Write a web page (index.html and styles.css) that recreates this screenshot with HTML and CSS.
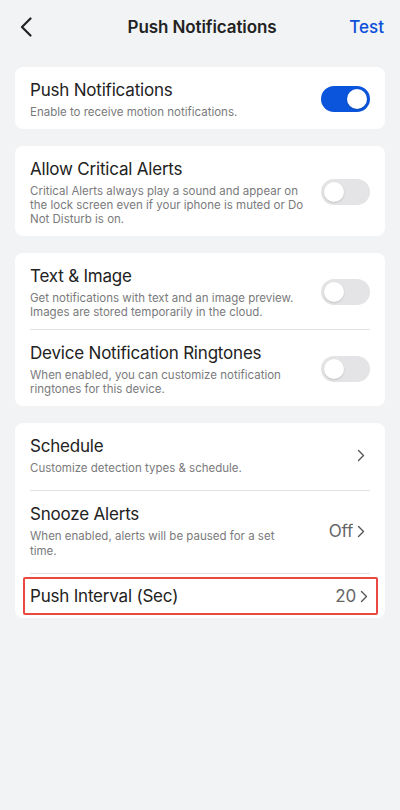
FILE: index.html
```html
<!DOCTYPE html>
<html lang="en">
<head>
<meta charset="UTF-8" />
<meta name="viewport" content="width=device-width, initial-scale=1" />
<title>Push Notifications</title>
<link rel="stylesheet" href="styles.css">
</head>
<body>

<!-- Top bar -->
<div class="topbar">
  <button class="back-btn" aria-label="Back">
    <svg width="12" height="20" viewBox="0 0 12 20"><path d="M10.5 1.5 L2 10 L10.5 18.5" fill="none" stroke="#222" stroke-width="2.2" stroke-linecap="round" stroke-linejoin="round"/></svg>
  </button>
  <div class="topbar-title">Push Notifications</div>
  <button class="test-btn">Test</button>
</div>

<div class="settings">

  <div class="card">
    <div class="row">
      <div class="row-text">
        <div class="row-title">Push Notifications</div>
        <div class="row-sub">Enable to receive motion notifications.</div>
      </div>
      <div class="switch on"><span class="knob"></span></div>
    </div>
  </div>

  <div class="card">
    <div class="row">
      <div class="row-text">
        <div class="row-title">Allow Critical Alerts</div>
        <div class="row-sub">Critical Alerts always play a sound and appear on the lock screen even if your iphone is muted or Do Not Disturb is on.</div>
      </div>
      <div class="switch"><span class="knob"></span></div>
    </div>
  </div>

  <div class="card">
    <div class="row">
      <div class="row-text">
        <div class="row-title">Text &amp; Image</div>
        <div class="row-sub">Get notifications with text and an image preview. Images are stored temporarily in the cloud.</div>
      </div>
      <div class="switch"><span class="knob"></span></div>
    </div>
    <div class="divider"></div>
    <div class="row">
      <div class="row-text">
        <div class="row-title">Device Notification Ringtones</div>
        <div class="row-sub">When enabled, you can customize notification ringtones for this device.</div>
      </div>
      <div class="switch"><span class="knob"></span></div>
    </div>
  </div>

  <div class="card">
    <div class="row nav-row">
      <div class="row-text">
        <div class="row-title">Schedule</div>
        <div class="row-sub">Customize detection types &amp; schedule.</div>
      </div>
      <div class="row-value">
        <svg class="chev" width="8" height="13" viewBox="0 0 8 13"><path d="M1.5 1.5 L6.5 6.5 L1.5 11.5" fill="none" stroke="#555" stroke-width="1.4" stroke-linecap="round" stroke-linejoin="round"/></svg>
      </div>
    </div>
    <div class="divider"></div>
    <div class="row nav-row">
      <div class="row-text">
        <div class="row-title">Snooze Alerts</div>
        <div class="row-sub">When enabled, alerts will be paused for a set time.</div>
      </div>
      <div class="row-value">
        <span>Off</span>
        <svg class="chev" width="8" height="13" viewBox="0 0 8 13"><path d="M1.5 1.5 L6.5 6.5 L1.5 11.5" fill="none" stroke="#555" stroke-width="1.4" stroke-linecap="round" stroke-linejoin="round"/></svg>
      </div>
    </div>
    <div class="divider"></div>
    <div class="highlight-wrap">
      <div class="row single highlight">
        <div class="row-title">Push Interval (Sec)</div>
        <div class="row-value">
          <span>20</span>
          <svg class="chev" width="8" height="13" viewBox="0 0 8 13"><path d="M1.5 1.5 L6.5 6.5 L1.5 11.5" fill="none" stroke="#555" stroke-width="1.4" stroke-linecap="round" stroke-linejoin="round"/></svg>
        </div>
      </div>
    </div>
  </div>

</div>

</body>
</html>
```

FILE: styles.css
```css
/* Reset & base */
* {
  box-sizing: border-box;
}
body {
  margin: 0;
  font-family: Inter, 'Noto Sans', 'Liberation Sans', sans-serif;
  background: #f2f3f5;
  color: #222;
  min-height: 100vh;
}

/* Top bar */
.topbar {
  height: 54px;
  display: flex;
  align-items: center;
  justify-content: space-between;
  padding: 0 16px 0 20px;
}
.back-btn {
  background: none;
  border: none;
  padding: 0;
  width: 40px;
  height: 30px;
  display: flex;
  align-items: center;
  cursor: pointer;
}
.topbar-title {
  font-size: 17px;
  font-weight: 600;
  letter-spacing: -0.1px;
  color: #222;
}
.test-btn {
  background: none;
  border: none;
  padding: 0;
  width: 40px;
  text-align: right;
  font-family: inherit;
  font-size: 17px;
  font-weight: 500;
  color: #0b50d9;
  cursor: pointer;
}

/* Cards */
.settings {
  padding: 13px 15px 20px;
  display: flex;
  flex-direction: column;
  gap: 17px;
}
.card {
  background: #fff;
  border-radius: 8px;
}
.divider {
  height: 1px;
  margin: 0 15px;
  background: #e2e2e4;
}

/* Rows */
.row {
  display: flex;
  align-items: center;
  justify-content: space-between;
  padding: 12px 15px 10px;
}
.nav-row {
  padding-bottom: 14px;
}
.row-text {
  max-width: 278px;
}
.nav-row .row-text {
  max-width: 264px;
}
.row-title {
  font-size: 17px;
  line-height: 22px;
  letter-spacing: -0.2px;
  color: #222;
}
.row-sub {
  margin-top: 4px;
  font-size: 11.5px;
  line-height: 14px;
  letter-spacing: 0;
  color: #7a7a7c;
}
.nav-row .row-sub {
  line-height: 15px;
}
.row-value {
  display: flex;
  align-items: center;
  gap: 4px;
  padding-right: 5px;
  font-size: 17px;
  letter-spacing: -0.2px;
  color: #666;
}

/* Highlighted row */
.highlight-wrap {
  padding: 3px 7px 3px 8px;
}
.row.single {
  padding: 0 0 0 5px;
  height: 38px;
}
.highlight {
  border: 2px solid #ea4841;
  border-radius: 2px;
}
.highlight .row-value {
  padding-right: 8px;
}

/* Toggle switch */
.switch {
  flex: none;
  width: 49px;
  height: 26px;
  border-radius: 13px;
  background: #e4e4e6;
  padding: 3px;
  display: flex;
}
.switch .knob {
  width: 20px;
  height: 20px;
  border-radius: 50%;
  background: #fff;
  box-shadow: 0 1px 2px rgba(0,0,0,0.15);
}
.switch.on {
  background: #0b55dc;
  justify-content: flex-end;
}
```
